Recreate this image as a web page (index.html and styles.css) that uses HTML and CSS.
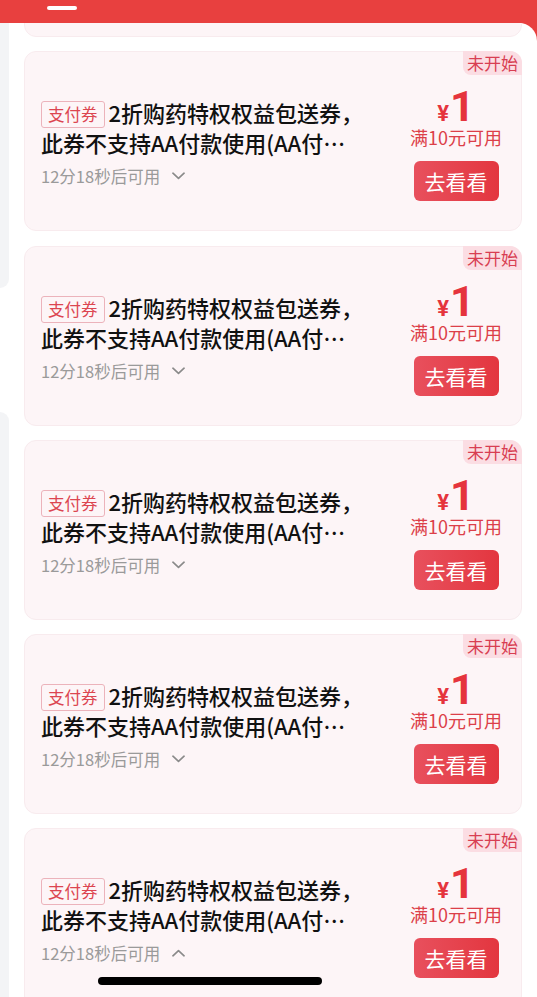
FILE: index.html
```html
<!DOCTYPE html>
<html lang="zh-CN">
<head>
  <meta charset="UTF-8" />
  <title>优惠券</title>
  <link rel="stylesheet" href="styles.css">
</head>
<body>

  <div class="header">
    <span class="grip"></span>
  </div>

  <div class="content">
    <aside class="side">
      <div class="side-item top"></div>
      <div class="side-item active"></div>
      <div class="side-item bottom"></div>
    </aside>

    <main class="sheet">
      <div class="list">

        <div class="card">
          <span class="status">未开始</span>
          <div class="info">
            <div class="title">
              <div class="line"><span class="tag">支付券</span>2折购药特权权益包送券，</div>
              <div class="line">此券不支持AA付款使用(AA付…</div>
            </div>
            <div class="time">12分18秒后可用 <svg class="chev" viewBox="0 0 14 8"><path d="M1 1l6 5.5L13 1" /></svg></div>
          </div>
          <div class="price">
            <div class="amount"><span class="yen">¥</span>1</div>
            <div class="cond">满10元可用</div>
            <button class="go">去看看</button>
          </div>
        </div>

        <div class="card">
          <span class="status">未开始</span>
          <div class="info">
            <div class="title">
              <div class="line"><span class="tag">支付券</span>2折购药特权权益包送券，</div>
              <div class="line">此券不支持AA付款使用(AA付…</div>
            </div>
            <div class="time">12分18秒后可用 <svg class="chev" viewBox="0 0 14 8"><path d="M1 1l6 5.5L13 1" /></svg></div>
          </div>
          <div class="price">
            <div class="amount"><span class="yen">¥</span>1</div>
            <div class="cond">满10元可用</div>
            <button class="go">去看看</button>
          </div>
        </div>

        <div class="card">
          <span class="status">未开始</span>
          <div class="info">
            <div class="title">
              <div class="line"><span class="tag">支付券</span>2折购药特权权益包送券，</div>
              <div class="line">此券不支持AA付款使用(AA付…</div>
            </div>
            <div class="time">12分18秒后可用 <svg class="chev" viewBox="0 0 14 8"><path d="M1 1l6 5.5L13 1" /></svg></div>
          </div>
          <div class="price">
            <div class="amount"><span class="yen">¥</span>1</div>
            <div class="cond">满10元可用</div>
            <button class="go">去看看</button>
          </div>
        </div>

        <div class="card">
          <span class="status">未开始</span>
          <div class="info">
            <div class="title">
              <div class="line"><span class="tag">支付券</span>2折购药特权权益包送券，</div>
              <div class="line">此券不支持AA付款使用(AA付…</div>
            </div>
            <div class="time">12分18秒后可用 <svg class="chev" viewBox="0 0 14 8"><path d="M1 1l6 5.5L13 1" /></svg></div>
          </div>
          <div class="price">
            <div class="amount"><span class="yen">¥</span>1</div>
            <div class="cond">满10元可用</div>
            <button class="go">去看看</button>
          </div>
        </div>

        <div class="card">
          <span class="status">未开始</span>
          <div class="info">
            <div class="title">
              <div class="line"><span class="tag">支付券</span>2折购药特权权益包送券，</div>
              <div class="line">此券不支持AA付款使用(AA付…</div>
            </div>
            <div class="time">12分18秒后可用 <svg class="chev" viewBox="0 0 14 8"><path d="M1 1l6 5.5L13 1" /></svg></div>
          </div>
          <div class="price">
            <div class="amount"><span class="yen">¥</span>1</div>
            <div class="cond">满10元可用</div>
            <button class="go">去看看</button>
          </div>
        </div>

        <div class="card">
          <span class="status">未开始</span>
          <div class="info">
            <div class="title">
              <div class="line"><span class="tag">支付券</span>2折购药特权权益包送券，</div>
              <div class="line">此券不支持AA付款使用(AA付…</div>
            </div>
            <div class="time">12分18秒后可用 <svg class="chev up" viewBox="0 0 14 8"><path d="M1 1l6 5.5L13 1" /></svg></div>
          </div>
          <div class="price">
            <div class="amount"><span class="yen">¥</span>1</div>
            <div class="cond">满10元可用</div>
            <button class="go">去看看</button>
          </div>
        </div>

      </div>
    </main>
  </div>

  <div class="home-bar"></div>

</body>
</html>
```

FILE: styles.css
```css
* {
  box-sizing: border-box;
}
body {
  margin: 0;
  height: 997px;
  overflow: hidden;
  background: #fff;
  font-family: "Noto Sans CJK SC", "Noto Sans", sans-serif;
  color: #111;
}
.header {
  height: 23px;
  background: #e8403f;
  padding: 6px 0 0 47px;
}
.grip {
  display: block;
  width: 30px;
  height: 3.5px;
  background: #fff;
  border-radius: 2px;
}
.content {
  display: flex;
  height: 974px;
  background: #e8403f;
}
.side {
  width: 9px;
  background: #fff;
  display: flex;
  flex-direction: column;
}
.side-item {
  background: #f3f4f6;
}
.side-item.top {
  height: 265px;
  border-bottom-right-radius: 10px;
}
.side-item.active {
  height: 124px;
  background: #fff;
}
.side-item.bottom {
  flex: 1;
  border-top-right-radius: 10px;
}
.sheet {
  flex: 1;
  background: #fff;
  border-top-right-radius: 18px;
  overflow: hidden;
  padding: 0 15px;
}
.list {
  margin-top: -166px;
  display: flex;
  flex-direction: column;
  gap: 14.3px;
}
.card {
  position: relative;
  height: 180px;
  background: #fdf5f7;
  border: 1px solid #f8ebee;
  border-radius: 12px;
  display: flex;
  align-items: center;
  padding: 4px 19px 0 16px;
}
.status {
  position: absolute;
  top: -1px;
  right: -1px;
  height: 24px;
  padding: 0 4px;
  background: #fbdde3;
  color: #d83e52;
  font-size: 17px;
  line-height: 24px;
  border-radius: 0 12px 0 8px;
}
.info {
  flex: 1;
}
.title {
  font-size: 22px;
  line-height: 29px;
  font-weight: 500;
  color: #111;
}
.line {
  white-space: nowrap;
}
.tag {
  display: inline-block;
  height: 27px;
  line-height: 25px;
  padding: 0 6px;
  margin-right: 4px;
  border: 1px solid #ecb3bb;
  border-radius: 3px;
  color: #dc4550;
  font-size: 16.5px;
  font-weight: 400;
  vertical-align: 1px;
}
.time {
  margin-top: 7px;
  font-size: 16.5px;
  line-height: 24px;
  color: #9a9a9a;
  display: flex;
  align-items: center;
}
.chev {
  width: 13px;
  height: 8px;
  margin-left: 12px;
  fill: none;
  stroke: #8a8a8a;
  stroke-width: 1.8;
  stroke-linecap: round;
  stroke-linejoin: round;
}
.chev.up {
  transform: rotate(180deg);
}
.price {
  width: 92px;
  margin-top: 2px;
  display: flex;
  flex-direction: column;
  align-items: center;
  color: #dc3f49;
}
.amount {
  font-family: "Roboto", "Noto Sans", sans-serif;
  font-size: 43px;
  line-height: 39px;
  font-weight: 700;
  color: #e5343d;
}
.yen {
  font-size: 22px;
  line-height: 1;
  margin-right: 1px;
}
.cond {
  font-size: 18px;
  line-height: 22px;
}
.go {
  margin-top: 13px;
  width: 85px;
  height: 40px;
  border: none;
  border-radius: 6px;
  background: linear-gradient(90deg, #e8505d, #e3363f);
  color: #fff;
  font-family: "Noto Sans CJK SC", sans-serif;
  font-size: 21px;
  padding: 0;
}
.home-bar {
  position: absolute;
  left: 98px;
  top: 977px;
  width: 224px;
  height: 8px;
  border-radius: 4px;
  background: #000;
}
```
